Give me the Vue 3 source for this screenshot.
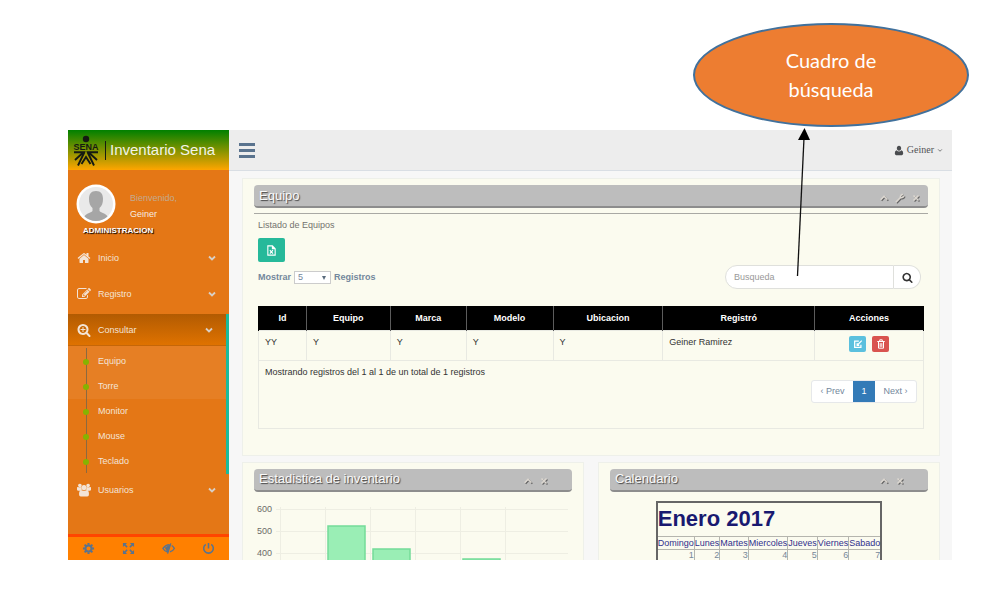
<script setup>
import { ref } from 'vue'

const search = ref('')
const pageSize = ref('5')

const icons = {
  home: 'M1472 992v480q0 26-19 45t-45 19h-384v-384h-256v384h-384q-26 0-45-19t-19-45v-480q0-1 .5-3t.5-3l575-474 575 474q1 2 1 6zm223-69l-62 74q-8 9-21 11h-3q-13 0-21-7l-692-577-692 577q-12 8-24 7-13-2-21-11l-62-74q-8-10-7-23.5t11-21.5l719-599q32-26 76-26t76 26l244 204v-195q0-14 9-23t23-9h192q14 0 23 9t9 23v408l219 182q10 8 11 21.5t-7 23.5z',
  edit: 'M888 1184l116-116-152-152-116 116v56h96v96h56zm440-720q-16-16-33 1l-350 350q-17 17-1 33t33-1l350-350q17-17 1-33zm80 594v190q0 119-84.5 203.5t-203.5 84.5h-832q-119 0-203.5-84.5t-84.5-203.5v-832q0-119 84.5-203.5t203.5-84.5h832q63 0 117 25 15 7 18 23 3 17-9 29l-49 49q-14 14-32 8-23-6-45-6h-832q-66 0-113 47t-47 113v832q0 66 47 113t113 47h832q66 0 113-47t47-113v-126q0-13 9-22l64-64q15-15 35-7t20 29zm-96-738l288 288-672 672h-288v-288zm444 132l-92 92-288-288 92-92q28-28 68-28t68 28l152 152q28 28 28 68t-28 68z',
  searchPlus: 'M1088 800v64q0 13-9.5 22.5t-22.5 9.5h-224v224q0 13-9.5 22.5t-22.5 9.5h-64q-13 0-22.5-9.5t-9.5-22.5v-224h-224q-13 0-22.5-9.5t-9.5-22.5v-64q0-13 9.5-22.5t22.5-9.5h224v-224q0-13 9.5-22.5t22.5-9.5h64q13 0 22.5 9.5t9.5 22.5v224h224q13 0 22.5 9.5t9.5 22.5zm128 32q0-185-131.5-316.5t-316.5-131.5-316.5 131.5-131.5 316.5 131.5 316.5 316.5 131.5 316.5-131.5 131.5-316.5zm512 832q0 53-37.5 90.5t-90.5 37.5q-54 0-90-38l-343-342q-179 124-399 124-143 0-273.5-55.5t-225-150-150-225-55.5-273.5 55.5-273.5 150-225 225-150 273.5-55.5 273.5 55.5 225 150 150 225 55.5 273.5q0 220-124 399l343 343q37 37 37 90z',
  search: 'M1216 832q0-185-131.5-316.5t-316.5-131.5-316.5 131.5-131.5 316.5 131.5 316.5 316.5 131.5 316.5-131.5 131.5-316.5zm512 832q0 53-37.5 90.5t-90.5 37.5q-54 0-90-38l-343-342q-179 124-399 124-143 0-273.5-55.5t-225-150-150-225-55.5-273.5 55.5-273.5 150-225 225-150 273.5-55.5 273.5 55.5 225 150 150 225 55.5 273.5q0 220-124 399l343 343q37 37 37 90z',
  users: 'M370 80a230 230 0 1 0 1 0zM1422 80a230 230 0 1 0 1 0zM896 260a330 330 0 1 0 1 0zM0 560q40-80 120-40q230 110 420 0q-30 240 110 370q-190 10-290 110h-170q-190 0-190-130q0-200 0-310zM1792 560q-40-80-120-40q-230 110-420 0q30 240-110 370q190 10 290 110h170q190 0 190-130q0-200 0-310zM540 930q90-10 140 30q216 120 432 0q50-40 140-30q280 30 280 500q0 290-220 290h-832q-220 0-220-290q0-470 280-500z',
  user: 'M896 60c240 0 390 170 390 420s-170 460-390 460s-390-210-390-460s150-420 390-420zM460 850q190 210 436 210t436-210q320 50 320 560q0 320-240 320h-1032q-240 0-240-320q0-510 320-560z'
}

const submenu = ['Equipo', 'Torre', 'Monitor', 'Mouse', 'Teclado']
const menu = [
  { label: 'Inicio', icon: 'home' },
  { label: 'Registro', icon: 'edit' },
  { label: 'Consultar', icon: 'searchPlus', children: submenu },
  { label: 'Usuarios', icon: 'users' }
]
const columns = [
  ['Id', 48], ['Equipo', 84], ['Marca', 76], ['Modelo', 87],
  ['Ubicacion', 110], ['Registró', 152], ['Acciones', 109]
]
const row = ['YY', 'Y', 'Y', 'Y', 'Y', 'Geiner Ramirez']
const weekdays = ['Domingo', 'Lunes', 'Martes', 'Miercoles', 'Jueves', 'Viernes', 'Sabado']
const weeks = [[1, 2, 3, 4, 5, 6, 7]]
const gridLines = [26, 71, 116, 161, 206, 251]
const ticks = [[600, 10], [500, 32], [400, 54]]
const bars = [[74, 27], [119, 50], [209, 60]]
</script>

<template>
  <div class="page">
    <div class="window">
      <aside class="sidebar">
        <a href="#" class="brand">
          <svg class="logo" viewBox="0 0 30 32" aria-hidden="true">
            <circle cx="15" cy="5" r="3.2" />
            <text x="15" y="15.8" text-anchor="middle" class="logo-text">SENA</text>
            <path d="M3 18.2h9.500L4 26M27 18.2h-9.500L26 26M13.500 18L7 31.500M16.500 18L23 31.500M10.500 30L15 23L19.500 30" fill="none" stroke="#151a12" stroke-width="1.900" />
          </svg>
          <span class="brand-bar"></span>
          <span>Inventario Sena</span>
        </a>
        <div class="profile">
          <svg class="avatar" viewBox="0 0 40 40" aria-hidden="true">
            <circle cx="20" cy="20" r="19.500" fill="#fff" />
            <circle cx="20" cy="20" r="17" fill="#e9e9e9" />
            <path d="M20 7c5 0 7 3 7 8 0 4-1 7-3.500 9v3c2 2 6 2 8 5.500a17 17 0 0 1-23 0c2-3.500 6-3.500 8-5.500v-3c-2.500-2-3.500-5-3.500-9 0-5 2-8 7-8z" fill="#a6a6a6" />
          </svg>
          <div class="welcome">
            <span>Bienvenido,</span>
            <strong>Geiner</strong>
          </div>
        </div>
        <div class="role">ADMINISTRACION</div>
        <nav class="menu">
          <div v-for="item in menu" :key="item.label" :class="['group', { active: item.children }]">
            <a href="#" class="item">
              <svg class="item-icon" viewBox="0 0 1792 1792" aria-hidden="true"><path :d="icons[item.icon]" /></svg>
              <span>{{ item.label }}</span>
              <svg class="chevron" viewBox="0 0 8 6" aria-hidden="true"><path d="M1 1.500L4 4.500L7 1.500" /></svg>
            </a>
            <ul v-if="item.children" class="submenu">
              <li v-for="child in item.children" :key="child"><a href="#">{{ child }}</a></li>
            </ul>
          </div>
        </nav>
        <div class="side-footer">
          <button type="button" aria-label="Configuración">
            <svg viewBox="0 0 14 14">
              <circle cx="7" cy="7" r="3.300" fill="none" stroke="currentColor" stroke-width="2.200" />
              <path d="M7 1v2M7 11v2M1 7h2M11 7h2M2.800 2.800l1.400 1.400M9.800 9.800l1.400 1.400M2.800 11.200l1.400-1.400M9.800 4.200l1.400-1.400" stroke="currentColor" stroke-width="2.200" />
            </svg>
          </button>
          <button type="button" aria-label="Pantalla completa">
            <svg viewBox="0 0 14 14">
              <path d="M1 1h4.500L1 5.500zM13 1v4.500L8.500 1zM1 13V8.500L5.500 13zM13 13H8.500L13 8.500z" fill="currentColor" />
              <path d="M2 2l3.500 3.500M12 2L8.500 5.500M2 12l3.500-3.500M12 12L8.500 8.500" stroke="currentColor" stroke-width="1.600" />
            </svg>
          </button>
          <button type="button" aria-label="Ocultar">
            <svg viewBox="0 0 14 14" fill="none" stroke="currentColor" stroke-width="1.500">
              <path d="M8 3C4.500 3 2.500 5 1 7c1 1.600 2.500 3 4.500 3.600M10.500 3.800C12 4.800 12.700 6 13.300 7c-1 1.800-2.500 3.200-4.800 3.700M9.500 1.500L6 12.500" />
              <path d="M8 4L4 6.500L6 10z" fill="currentColor" />
            </svg>
          </button>
          <button type="button" aria-label="Salir">
            <svg viewBox="0 0 14 14" fill="none" stroke="currentColor" stroke-width="1.700">
              <path d="M4 2.500a5.200 5.200 0 1 0 6 0M7 1v6" />
            </svg>
          </button>
        </div>
      </aside>

      <main class="main">
        <header class="topbar">
          <button type="button" class="burger" aria-label="Menú"><i></i><i></i><i></i></button>
          <a href="#" class="account">
            <svg viewBox="0 0 1792 1792" aria-hidden="true"><path :d="icons.user" /></svg>
            <span>Geiner</span>
            <svg class="caret" viewBox="0 0 8 6" aria-hidden="true"><path d="M1.500 1.500L4 4L6.500 1.500" /></svg>
          </a>
        </header>

        <div class="content">
          <section class="panel wide">
            <div class="title-bar">
              <h2>Equipo</h2>
              <div class="tools">
                <svg viewBox="0 0 12 12"><path d="M2 8l4-4l4 4" /></svg>
                <svg viewBox="0 0 12 12"><path d="M1 11l5.500-5.500M6.500 5.500C6 3 8 1.500 9.500 2M6.500 5.500C9 6 10.500 4.500 10.500 3" /></svg>
                <svg viewBox="0 0 12 12"><path d="M3 3l6 6M9 3L3 9" /></svg>
              </div>
            </div>
            <hr />
            <div class="body">
              <p class="lead">Listado de Equipos</p>
              <button type="button" class="excel" aria-label="Exportar">
                <svg viewBox="0 0 12 12" fill="none" stroke="currentColor" stroke-width="1.200">
                  <path d="M2 1h5l3 3v7H2zM7 1v3h3M4.200 5.500l3.400 4M7.600 5.500l-3.400 4" />
                </svg>
              </button>
              <div class="filters">
                <label class="size">
                  <span>Mostrar</span>
                  <span class="select-box">
                    <select v-model="pageSize">
                      <option>5</option>
                      <option>10</option>
                    </select>
                  </span>
                  <span>Registros</span>
                </label>
                <form class="search" @submit.prevent>
                  <input v-model="search" type="text" placeholder="Busqueda" aria-label="Busqueda" />
                  <button type="submit" aria-label="Buscar">
                    <svg viewBox="0 0 1792 1792"><path :d="icons.search" /></svg>
                  </button>
                </form>
              </div>
              <table class="grid">
                <colgroup>
                  <col v-for="c in columns" :key="c[0]" :style="{ width: c[1] / 6.66 + '%' }" />
                </colgroup>
                <thead>
                  <tr><th v-for="c in columns" :key="c[0]" scope="col">{{ c[0] }}</th></tr>
                </thead>
                <tbody>
                  <tr>
                    <td v-for="(value, i) in row" :key="i">{{ value }}</td>
                    <td>
                      <div class="actions">
                        <button type="button" class="edit" aria-label="Editar">
                          <svg viewBox="0 0 12 12" fill="none" stroke="currentColor" stroke-width="1.500">
                            <path d="M7 2.500H2v7.500h7.500V7M5 7.500l5.500-5.500M5 5v2.500h2.500" />
                          </svg>
                        </button>
                        <button type="button" class="delete" aria-label="Eliminar">
                          <svg viewBox="0 0 12 12" fill="none" stroke="currentColor" stroke-width="1.200">
                            <path d="M1.500 3h9M4.500 3V1h3v2M3 3v8h6V3M5 5v4.500M7 5v4.500" />
                          </svg>
                        </button>
                      </div>
                    </td>
                  </tr>
                </tbody>
                <tfoot>
                  <tr>
                    <td colspan="7">
                      <div class="foot">
                        <span>Mostrando registros del 1 al 1 de un total de 1 registros</span>
                        <nav class="pager" aria-label="Paginación">
                          <a href="#">‹ Prev</a><a href="#" class="current">1</a><a href="#">Next ›</a>
                        </nav>
                      </div>
                    </td>
                  </tr>
                </tfoot>
              </table>
            </div>
          </section>

          <div class="row">
            <section class="panel">
              <div class="title-bar narrow">
                <h2>Estadistica de inventario</h2>
                <div class="tools">
                  <svg viewBox="0 0 12 12"><path d="M2 8l4-4l4 4" /></svg>
                  <svg viewBox="0 0 12 12"><path d="M3 3l6 6M9 3L3 9" /></svg>
                </div>
              </div>
              <svg class="chart" viewBox="0 0 318 62">
                <path v-for="x in gridLines" :key="x" :d="`M${x}.5 8V62`" class="gridline" />
                <g v-for="t in ticks" :key="t[0]">
                  <path :d="`M22 ${t[1]}.5H314`" class="gridline" />
                  <text x="18" :y="t[1] + 3" text-anchor="end">{{ t[0] }}</text>
                </g>
                <rect v-for="b in bars" :key="b[0]" :x="b[0]" :y="b[1]" width="37" height="120" class="bar" />
              </svg>
            </section>
            <section class="panel">
              <div class="title-bar narrow">
                <h2>Calendario</h2>
                <div class="tools">
                  <svg viewBox="0 0 12 12"><path d="M2 8l4-4l4 4" /></svg>
                  <svg viewBox="0 0 12 12"><path d="M3 3l6 6M9 3L3 9" /></svg>
                </div>
              </div>
              <table class="calendar">
                <thead>
                  <tr><th colspan="7" class="month">Enero 2017</th></tr>
                  <tr><th v-for="d in weekdays" :key="d" scope="col">{{ d }}</th></tr>
                </thead>
                <tbody>
                  <tr v-for="(w, i) in weeks" :key="i"><td v-for="d in w" :key="d">{{ d }}</td></tr>
                </tbody>
              </table>
            </section>
          </div>
        </div>
      </main>
    </div>

    <div class="callout">
      <div class="bubble">Cuadro de<br />búsqueda</div>
      <svg class="arrow" viewBox="0 0 20 150" aria-hidden="true">
        <path d="M4.500 148L11 10" stroke="#111" stroke-width="1.300" />
        <path d="M11.500 0L17 12H5z" fill="#000" />
      </svg>
    </div>
  </div>
</template>

<style>
body {
  margin: 0;
  background: #fff;
}
</style>

<style scoped>
* {
  box-sizing: border-box;
}
.page {
  position: relative;
  display: flex;
  height: 100vh;
  padding: 130px 48px 39px 68px;
  font-family: "Liberation Sans", Arial, sans-serif;
  font-size: 9px;
  line-height: 12px;
  color: #73879c;
}
button {
  padding: 0;
  border: 0;
  background: none;
  color: inherit;
  font: inherit;
  cursor: pointer;
}
a {
  color: inherit;
  text-decoration: none;
}
svg {
  display: block;
}
.window {
  display: flex;
  flex: 1;
  min-width: 0;
  overflow: hidden;
  background: #f7f7f7;
}

.sidebar {
  display: flex;
  flex-direction: column;
  flex: 0 0 161px;
  background: #e47716;
  color: #f3e4d6;
}
.brand {
  display: flex;
  align-items: center;
  height: 40px;
  padding-left: 3px;
  background: linear-gradient(#008000, #ffa500);
  color: #f4f4e8;
  font-size: 15px;
  white-space: nowrap;
}
.logo {
  width: 30px;
  height: 32px;
}
.logo circle {
  fill: #151a12;
}
.logo-text {
  fill: #151a12;
  font-size: 9px;
  font-weight: bold;
}
.brand-bar {
  width: 1px;
  height: 19px;
  margin: 0 4px;
  background: #151a12;
}
.profile {
  display: flex;
  height: 54px;
  padding: 14px 0 0 8px;
}
.avatar {
  width: 40px;
  height: 40px;
}
.welcome {
  display: flex;
  flex-direction: column;
  gap: 4px;
  padding: 8px 0 0 14px;
  color: #c3aa8f;
}
.welcome strong {
  color: #f7ece0;
  font-weight: normal;
}
.role {
  height: 24px;
  padding-left: 15px;
  line-height: 14px;
  font-size: 8px;
  font-weight: bold;
  color: #fff;
  text-shadow: 1px 1px 1px #000;
}
.menu {
  flex: 1;
}
.item {
  display: flex;
  align-items: center;
  height: 32px;
  padding: 0 13px 0 9px;
}
.group {
  margin-bottom: 4px;
}
.group:first-child {
  margin-top: -6px;
}
.item-icon {
  width: 14px;
  height: 14px;
  margin-right: 7px;
  fill: currentColor;
}
.chevron {
  width: 8px;
  height: 6px;
  margin-left: auto;
  fill: none;
  stroke: #d8cfc6;
  stroke-width: 1.800;
}
.active {
  margin-bottom: 0;
  border-right: 3px solid #1abb9c;
}
.active .item {
  height: 32px;
  background: linear-gradient(#b25b02, #df7200);
  border-bottom: 1px solid #c56608;
}
.submenu {
  position: relative;
  margin: 0;
  padding: 3px 0 0;
  list-style: none;
  background: linear-gradient(#e67f24 53px, transparent 53px);
}
.submenu::before {
  content: "";
  position: absolute;
  top: 2px;
  bottom: 1px;
  left: 18px;
  width: 1px;
  background: #8b6a40;
}
.submenu li {
  position: relative;
  height: 25px;
  padding-left: 30px;
  line-height: 25px;
}
.submenu li::before {
  content: "";
  position: absolute;
  top: 10px;
  left: 15px;
  width: 6px;
  height: 6px;
  border-radius: 50%;
  background: #86b300;
}
.side-footer {
  display: grid;
  grid-template-columns: repeat(4, 1fr);
  flex: 0 0 26px;
  border-top: 3px solid #ff4500;
  background: #ff8000;
  color: #5a738e;
}
.side-footer button {
  display: flex;
  align-items: center;
  justify-content: center;
}
.side-footer svg {
  width: 13px;
  height: 13px;
}

.main {
  flex: 1;
  min-width: 0;
}
.topbar {
  display: flex;
  align-items: center;
  justify-content: space-between;
  height: 41px;
  padding: 0 9px 0 10px;
  background: #ededed;
  border-bottom: 1px solid #d9dee4;
}
.burger {
  display: flex;
  flex-direction: column;
  gap: 3px;
}
.burger i {
  width: 16px;
  height: 3px;
  background: #5a738e;
}
.account {
  display: flex;
  align-items: center;
  gap: 3px;
  font-family: "Liberation Serif", serif;
  font-size: 10px;
  color: #515356;
}
.account svg {
  width: 10px;
  height: 11px;
  fill: #4a4c4f;
}
.account .caret {
  width: 6px;
  height: 5px;
  fill: none;
  stroke: #515356;
}
.content {
  padding: 7px 12px 0 13px;
}
.panel {
  flex: 1;
  min-width: 0;
  padding: 6px 11px 0;
  border: 1px solid #eef0ea;
  background: #fbfbef;
}
.wide {
  padding-bottom: 26px;
}
.row {
  display: flex;
  gap: 14px;
  margin-top: 6px;
}
.title-bar {
  display: flex;
  align-items: center;
  justify-content: space-between;
  height: 23px;
  padding: 0 4px 0 5px;
  border-radius: 4px;
  border-bottom: 2px solid #8d8d8d;
  background: #bdbdbd;
}
.title-bar.narrow {
  padding-right: 20px;
}
.title-bar h2 {
  margin: 0;
  font-size: 13px;
  line-height: 18px;
  font-weight: normal;
  color: #fafafa;
  text-shadow: 1px 1px 1px #444;
}
.tools {
  display: flex;
  gap: 6px;
  padding: 4px 3px 0 0;
}
.tools svg {
  width: 10px;
  height: 10px;
  fill: none;
  stroke: #dcd7d0;
  stroke-width: 1.800;
  filter: drop-shadow(1px 1px 0 #666);
}
hr {
  margin: 5px 0;
  border: 0;
  border-top: 1px solid #a9a9a4;
}
.body {
  padding: 0 4px;
}
.lead {
  margin: 0 0 7px;
  color: #73736e;
}
.excel {
  display: flex;
  align-items: center;
  justify-content: center;
  width: 27px;
  height: 24px;
  border-radius: 2px;
  background: #26b99a;
  color: #fff;
}
.excel svg {
  width: 11px;
  height: 11px;
}
.filters {
  display: flex;
  align-items: center;
  justify-content: space-between;
  margin: 3px 3px 17px 0;
}
.size {
  display: flex;
  align-items: center;
  gap: 3px;
  font-weight: bold;
}
.select-box {
  position: relative;
}
.select-box::after {
  content: "";
  position: absolute;
  top: 5px;
  right: 5px;
  border: 2px solid transparent;
  border-top: 4px solid #5a6b7c;
  border-bottom: 0;
}
select {
  display: block;
  width: 37px;
  height: 13px;
  padding: 0 3px;
  appearance: none;
  border: 1px solid #ccc;
  border-radius: 0;
  background: #fff;
  color: #73879c;
  font: inherit;
  font-weight: normal;
  line-height: 11px;
}
.search {
  display: flex;
  width: 196px;
  height: 24px;
}
.search input {
  flex: 1;
  min-width: 0;
  padding: 0 8px;
  border: 1px solid #dfe0dc;
  border-radius: 12px 0 0 12px;
  background: #fff;
  font: inherit;
  outline: 0;
}
.search input::placeholder {
  color: #999;
}
.search button {
  display: flex;
  align-items: center;
  justify-content: center;
  width: 27px;
  border: 1px solid #dfe0dc;
  border-left: 0;
  border-radius: 0 12px 12px 0;
  background: #fff;
}
.search svg {
  width: 11px;
  height: 11px;
  fill: #333;
}
.grid {
  width: 100%;
  table-layout: fixed;
  border-collapse: collapse;
  color: #333;
}
.grid th {
  height: 24px;
  padding: 0;
  border: 1px solid #5c5c5c;
  border-width: 0 1px;
  background: #000;
  color: #fff;
}
.grid th:first-child {
  border-left-color: #000;
}
.grid th:last-child {
  border-right-color: #000;
}
.grid td {
  padding: 5px 6px;
  border: 1px solid #e8e9e2;
  vertical-align: top;
}
.grid tbody td {
  height: 30px;
}
.actions {
  display: flex;
  justify-content: center;
  gap: 6px;
}
.actions button {
  display: flex;
  align-items: center;
  justify-content: center;
  width: 17px;
  height: 16px;
  border-radius: 2px;
  color: #fff;
}
.actions svg {
  width: 10px;
  height: 10px;
}
.edit {
  background: #5bc0de;
}
.delete {
  background: #d9534f;
}
.foot {
  display: flex;
  justify-content: space-between;
  height: 57px;
}
.pager {
  display: flex;
  height: 23px;
  margin-top: 14px;
  border: 1px solid #e6e8ea;
  border-radius: 3px;
  background: #fff;
  line-height: 21px;
  color: #73879c;
}
.pager a {
  width: 41px;
  text-align: center;
}
.pager .current {
  width: 22px;
  background: #337ab7;
  color: #fff;
}
.chart {
  width: 100%;
  margin-top: 7px;
}
.chart text {
  font-size: 9px;
  fill: #6b6b68;
}
.gridline {
  fill: none;
  stroke: #eeeee3;
}
.bar {
  fill: #9aeeb5;
  stroke: #74dc99;
  stroke-width: 1.500;
}
.calendar {
  margin: 9px auto 0;
  border: 2px solid #666;
  border-collapse: collapse;
  color: #778899;
}
.calendar th,
.calendar td {
  padding: 0;
  border: 1px solid #b5b5ae;
  text-align: right;
}
.calendar th {
  color: #30308c;
  font-weight: normal;
}
.calendar td {
  line-height: 10px;
}
.calendar .month {
  height: 35px;
  font-size: 22px;
  line-height: 26px;
  font-weight: bold;
  text-align: left;
  color: #191970;
}

.callout {
  position: absolute;
  top: 23px;
  right: 31px;
  width: 276px;
}
.bubble {
  display: flex;
  align-items: center;
  justify-content: center;
  height: 104px;
  border: 2px solid #41719c;
  border-radius: 50%;
  background: #ed7d31;
  color: #fff;
  font-family: Lato, "Open Sans", sans-serif;
  font-size: 20px;
  line-height: 29px;
  text-align: center;
}
.arrow {
  width: 20px;
  height: 150px;
  margin: 1px 0 0 100px;
  pointer-events: none;
}
</style>
